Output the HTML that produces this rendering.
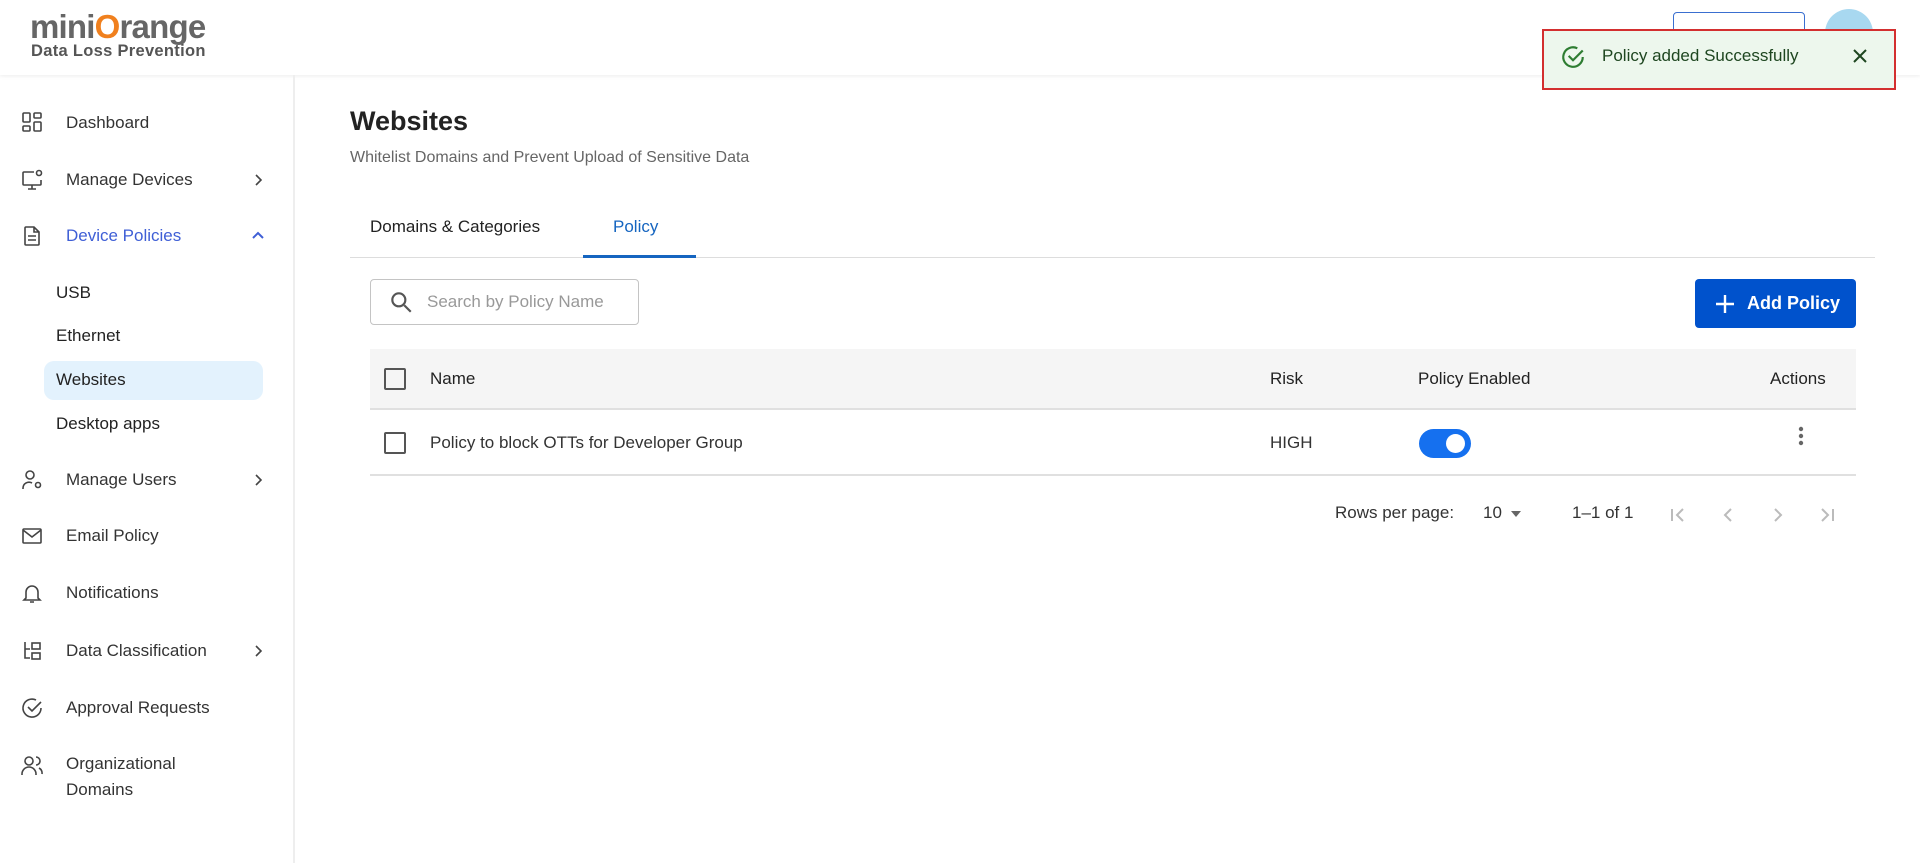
<!DOCTYPE html>
<html><head><meta charset="utf-8"><style>
*{box-sizing:border-box;margin:0;padding:0}
body{width:1920px;height:863px;overflow:hidden;background:#fff;font-family:"Liberation Sans",sans-serif;color:#222;position:relative}
.abs{position:absolute}
.hdr{left:0;top:0;width:1920px;height:75px;background:#fff;box-shadow:0 1px 4px rgba(0,0,0,.08)}
.side{left:0;top:75px;width:295px;height:788px;border-right:2px solid #eee}
.mi{position:absolute;left:66px;font-size:17px;color:#333;transform:translateY(-50%)}
.ic{position:absolute;left:20px;width:24px;height:24px;transform:translateY(-50%)}
.chev{position:absolute;left:250px;transform:translateY(-50%)}
.sub{position:absolute;left:56px;font-size:17px;color:#222;transform:translateY(-50%)}
svg{display:block}
</style></head><body>
<div class="abs hdr"></div>
<div class="abs" style="left:30px;top:8px;font-size:33px;font-weight:bold;color:#666;letter-spacing:-0.8px">mini<span style="color:#f0801e">O</span>range</div>
<div class="abs" style="left:31px;top:42px;font-size:16.5px;font-weight:bold;color:#555;letter-spacing:0.3px">Data Loss Prevention</div>
<div class="abs" style="left:1673px;top:12px;width:132px;height:40px;border:1.5px solid #3a6fd0;border-radius:4px"></div>
<div class="abs" style="left:1825px;top:9px;width:48px;height:48px;border-radius:50%;background:#a8d8f0"></div>

<div class="abs side">
</div>
<!-- menu -->
<svg class="ic" style="top:122px" viewBox="0 0 24 24" fill="none" stroke="#444" stroke-width="1.6"><rect x="3" y="3" width="7" height="9" rx="1"/><rect x="14" y="3" width="7" height="5" rx="1"/><rect x="3" y="16" width="7" height="5" rx="1"/><rect x="14" y="12" width="7" height="9" rx="1"/></svg>
<div class="mi" style="top:123px">Dashboard</div>
<svg class="ic" style="top:180px" viewBox="0 0 24 24" fill="none" stroke="#444" stroke-width="1.6"><path d="M14 4H4a1 1 0 0 0-1 1v11a1 1 0 0 0 1 1h16a1 1 0 0 0 1-1v-4M12 17v4M8 21h8"/><circle cx="19" cy="5" r="2.5"/></svg>
<div class="mi" style="top:180px">Manage Devices</div>
<svg class="chev" style="top:180px" width="16" height="16" viewBox="0 0 16 16" fill="none" stroke="#444" stroke-width="1.6"><path d="M6 3l5 5-5 5"/></svg>
<svg class="ic" style="top:236px" viewBox="0 0 24 24" fill="none" stroke="#444" stroke-width="1.6"><path d="M14 3H6a1 1 0 0 0-1 1v16a1 1 0 0 0 1 1h12a1 1 0 0 0 1-1V8z M14 3v5h5 M8 12h8M8 16h8"/></svg>
<div class="mi" style="top:236px;color:#3f5fd6">Device Policies</div>
<svg class="chev" style="top:236px" width="16" height="16" viewBox="0 0 16 16" fill="none" stroke="#3f5fd6" stroke-width="2"><path d="M3 10l5-5 5 5"/></svg>
<div class="sub" style="top:293px">USB</div>
<div class="sub" style="top:336px">Ethernet</div>
<div class="abs" style="left:44px;top:361px;width:219px;height:39px;border-radius:10px;background:#e3f2fd"></div>
<div class="sub" style="top:380px">Websites</div>
<div class="sub" style="top:424px">Desktop apps</div>
<svg class="ic" style="top:480px" viewBox="0 0 24 24" fill="none" stroke="#444" stroke-width="1.6"><circle cx="10" cy="7" r="4"/><path d="M3 21v-1a6 6 0 0 1 9-5"/><circle cx="18" cy="17" r="2.5"/></svg>
<div class="mi" style="top:480px">Manage Users</div>
<svg class="chev" style="top:480px" width="16" height="16" viewBox="0 0 16 16" fill="none" stroke="#444" stroke-width="1.6"><path d="M6 3l5 5-5 5"/></svg>
<svg class="ic" style="top:536px" viewBox="0 0 24 24" fill="none" stroke="#444" stroke-width="1.6"><rect x="3" y="5" width="18" height="14" rx="1"/><path d="M3 6l9 7 9-7"/></svg>
<div class="mi" style="top:536px">Email Policy</div>
<svg class="ic" style="top:593px" viewBox="0 0 24 24" fill="none" stroke="#444" stroke-width="1.6"><path d="M6 17V11a6 6 0 0 1 12 0v6l2 2H4z M10 21h4"/></svg>
<div class="mi" style="top:593px">Notifications</div>
<svg class="ic" style="top:651px" viewBox="0 0 24 24" fill="none" stroke="#444" stroke-width="1.6"><path d="M5 3v16h5M5 10h5"/><rect x="12" y="4" width="8" height="6"/><rect x="12" y="14" width="8" height="6"/></svg>
<div class="mi" style="top:651px">Data Classification</div>
<svg class="chev" style="top:651px" width="16" height="16" viewBox="0 0 16 16" fill="none" stroke="#444" stroke-width="1.6"><path d="M6 3l5 5-5 5"/></svg>
<svg class="ic" style="top:708px" viewBox="0 0 24 24" fill="none" stroke="#444" stroke-width="1.6"><path d="M21 12a9 9 0 1 1-5-8"/><path d="M8 11l4 4 9-9"/></svg>
<div class="mi" style="top:708px">Approval Requests</div>
<svg class="ic" style="top:766px" viewBox="0 0 24 24" fill="none" stroke="#444" stroke-width="1.6"><circle cx="9" cy="7" r="4"/><path d="M2 21v-1a7 7 0 0 1 14 0v1M16 3a4 4 0 0 1 0 8M19 14a6 6 0 0 1 3 6"/></svg>
<div class="mi" style="top:764px">Organizational</div>
<div class="mi" style="top:790px">Domains</div>

<!-- main -->
<div class="abs" style="left:350px;top:106px;font-size:27px;font-weight:bold;color:#222">Websites</div>
<div class="abs" style="left:350px;top:149px;font-size:16px;color:#666">Whitelist Domains and Prevent Upload of Sensitive Data</div>
<div class="abs" style="left:370px;top:217px;font-size:17px;color:#222">Domains &amp; Categories</div>
<div class="abs" style="left:613px;top:217px;font-size:17px;color:#1565c0">Policy</div>
<div class="abs" style="left:350px;top:257px;width:1525px;height:1px;background:#ddd"></div>
<div class="abs" style="left:583px;top:255px;width:113px;height:3px;background:#1565c0"></div>

<div class="abs" style="left:370px;top:279px;width:269px;height:46px;border:1px solid #c4c4c4;border-radius:4px"></div>
<svg class="abs" style="left:388px;top:289px" width="26" height="26" viewBox="0 0 24 24" fill="none" stroke="#555" stroke-width="2"><circle cx="10" cy="10" r="6"/><path d="M15 15l6 6"/></svg>
<div class="abs" style="left:427px;top:292px;font-size:17px;color:#999">Search by Policy Name</div>
<div class="abs" style="left:1695px;top:279px;width:161px;height:49px;background:#0052cc;border-radius:4px;color:#fff;font-size:18px;font-weight:bold;line-height:49px;padding-left:52px">Add Policy</div>
<svg class="abs" style="left:1713px;top:292px" width="24" height="24" viewBox="0 0 24 24" stroke="#fff" stroke-width="2.4"><path d="M12 3v18M3 12h18"/></svg>

<div class="abs" style="left:370px;top:349px;width:1486px;height:61px;background:#f5f5f5;border-bottom:2px solid #e0e0e0"></div>
<div class="abs" style="left:384px;top:368px;width:22px;height:22px;border:2px solid #555;border-radius:2px"></div>
<div class="abs" style="left:430px;top:369px;font-size:17px;color:#222">Name</div>
<div class="abs" style="left:1270px;top:369px;font-size:17px;color:#222">Risk</div>
<div class="abs" style="left:1418px;top:369px;font-size:17px;color:#222">Policy Enabled</div>
<div class="abs" style="left:1770px;top:369px;font-size:17px;color:#222">Actions</div>

<div class="abs" style="left:370px;top:474px;width:1486px;height:2px;background:#e0e0e0"></div>
<div class="abs" style="left:384px;top:432px;width:22px;height:22px;border:2px solid #555;border-radius:2px"></div>
<div class="abs" style="left:430px;top:433px;font-size:17px;color:#333">Policy to block OTTs for Developer Group</div>
<div class="abs" style="left:1270px;top:433px;font-size:17px;color:#333">HIGH</div>
<div class="abs" style="left:1419px;top:429px;width:52px;height:29px;border-radius:15px;background:#1570ef"></div>
<div class="abs" style="left:1446px;top:434px;width:19px;height:19px;border-radius:50%;background:#fff"></div>
<svg class="abs" style="left:1795px;top:425px" width="12" height="24" viewBox="0 0 12 24" fill="#666"><circle cx="6" cy="4" r="2.2"/><circle cx="6" cy="11" r="2.2"/><circle cx="6" cy="18" r="2.2"/></svg>

<div class="abs" style="left:1335px;top:503px;font-size:17px;color:#333">Rows per page:</div>
<div class="abs" style="left:1483px;top:503px;font-size:17px;color:#333">10</div>
<svg class="abs" style="left:1509px;top:510px" width="14" height="8" viewBox="0 0 14 8" fill="#666"><path d="M2 1h10l-5 6z"/></svg>
<div class="abs" style="left:1572px;top:503px;font-size:17px;color:#333">1–1 of 1</div>
<svg class="abs" style="left:1666px;top:503px" width="24" height="24" viewBox="0 0 24 24" fill="none" stroke="#bbb" stroke-width="2"><path d="M6 6v12M17 6l-6 6 6 6"/></svg>
<svg class="abs" style="left:1716px;top:503px" width="24" height="24" viewBox="0 0 24 24" fill="none" stroke="#bbb" stroke-width="2"><path d="M15 6l-6 6 6 6"/></svg>
<svg class="abs" style="left:1766px;top:503px" width="24" height="24" viewBox="0 0 24 24" fill="none" stroke="#bbb" stroke-width="2"><path d="M9 6l6 6-6 6"/></svg>
<svg class="abs" style="left:1815px;top:503px" width="24" height="24" viewBox="0 0 24 24" fill="none" stroke="#bbb" stroke-width="2"><path d="M7 6l6 6-6 6M18 6v12"/></svg>

<!-- toast -->
<div class="abs" style="left:1542px;top:29px;width:354px;height:61px;background:#edf7ed;border:2px solid #d32f2f"></div>
<svg class="abs" style="left:1560px;top:44px" width="26" height="26" viewBox="0 0 24 24" fill="none" stroke="#2e7d32" stroke-width="2"><path d="M21 12a9 9 0 1 1-5-8"/><path d="M8 11l4 4 9-9"/></svg>
<div class="abs" style="left:1602px;top:46px;font-size:17px;color:#1e4620">Policy added Successfully</div>
<svg class="abs" style="left:1851px;top:47px" width="18" height="18" viewBox="0 0 18 18" stroke="#1e4620" stroke-width="2"><path d="M3 3l12 12M15 3L3 15"/></svg>
</body></html>
